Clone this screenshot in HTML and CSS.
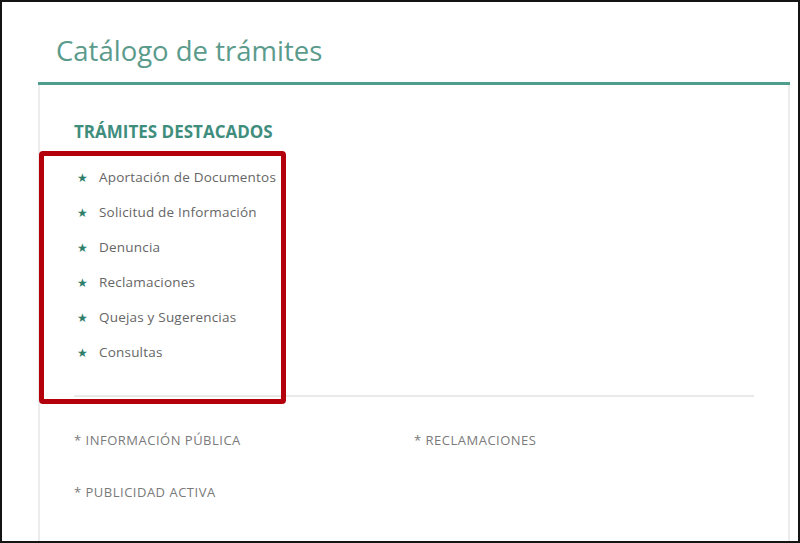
FILE: index.html
```html
<!DOCTYPE html>
<html lang="es">
<head>
<meta charset="utf-8">
<title>Catálogo de trámites</title>
<link rel="stylesheet" href="styles.css">
</head>
<body>
<div class="frame">
  <div class="page">
    <h1 class="title">Catálogo de trámites</h1>
    <div class="rule"></div>
    <section class="card">
      <h2 class="featured-heading">TRÁMITES DESTACADOS</h2>
      <ul class="featured-list">
        <li><span class="star">★</span>Aportación de Documentos</li>
        <li><span class="star">★</span>Solicitud de Información</li>
        <li><span class="star">★</span>Denuncia</li>
        <li><span class="star">★</span>Reclamaciones</li>
        <li><span class="star">★</span>Quejas y Sugerencias</li>
        <li><span class="star">★</span>Consultas</li>
      </ul>
      <hr class="divider">
      <div class="categories">
        <div class="category">* INFORMACIÓN PÚBLICA</div>
        <div class="category">* RECLAMACIONES</div>
        <div class="category">* PUBLICIDAD ACTIVA</div>
      </div>
      <div class="highlight-box"></div>
    </section>
  </div>
</div>
</body>
</html>
```
FILE: styles.css
```css
* { box-sizing: border-box; }
html, body { margin: 0; padding: 0; background: #fff; }
body { font-family: "Open Sans", "Noto Sans", sans-serif; }

.frame {
  width: 800px;
  height: 543px;
  border: 2px solid #141414;
  overflow: hidden;
  background: #fff;
}

.page {
  display: flex;
  flex-direction: column;
  padding-left: 36px;
}

.title {
  margin: 30px 0 0 18px;
  font-size: 27.5px;
  line-height: 38px;
  font-weight: 400;
  color: #5b9b8c;
}

.rule {
  margin-top: 12px;
  width: 752px;
  height: 3px;
  background: #4f9d8c;
}

.card {
  position: relative;
  width: 752px;
  height: 460px;
  border-left: 2px solid #ececec;
  border-right: 2px solid #ececec;
  padding: 36px 34px 0 34px;
}

.featured-heading {
  margin: 0;
  font-size: 17px;
  line-height: 22px;
  font-weight: 700;
  color: #3f8e7d;
}

.featured-list {
  list-style: none;
  margin: 17px 0 0 0;
  padding: 0;
}

.featured-list li {
  display: flex;
  align-items: center;
  font-size: 13.5px;
  line-height: 35px;
  color: #666;
  letter-spacing: 0.2px;
}

.star {
  width: 25px;
  padding-left: 3px;
  font-size: 12px;
  color: #2f7e6c;
}

.divider {
  margin: 25px 0 0 0;
  border: 0;
  height: 2px;
  background: #e9e9e9;
}

.categories {
  margin-top: 33px;
  display: grid;
  grid-template-columns: 340px 340px;
  row-gap: 32px;
}

.category {
  font-size: 13px;
  line-height: 20px;
  color: #7a7a7a;
  letter-spacing: 0.5px;
}

.highlight-box {
  position: absolute;
  left: -1px;
  top: 66px;
  width: 247px;
  height: 253px;
  border: 5px solid #b3000c;
  border-radius: 4px;
}
```
